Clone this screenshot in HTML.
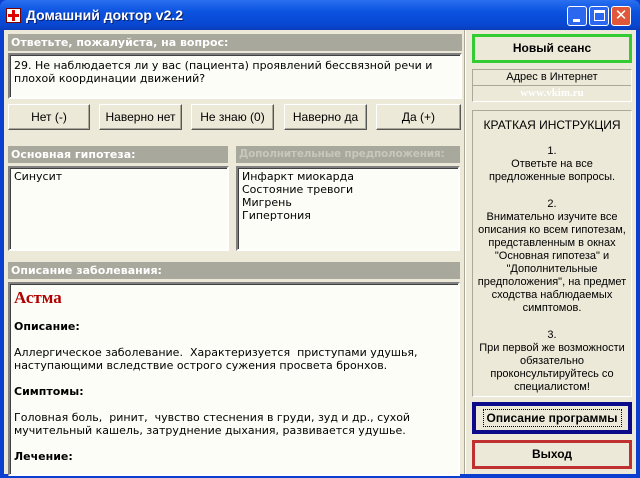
<!DOCTYPE html>
<html><head><meta charset="utf-8"><style>
*{margin:0;padding:0;box-sizing:border-box}
body{width:640px;height:478px;overflow:hidden;background:#0a3fd0;font-family:"Liberation Sans","DejaVu Sans",sans-serif;position:relative}
.abs{position:absolute}
.title{left:0;top:0;width:640px;height:30px;background:linear-gradient(#2a6ff0,#0a52e0 40%,#0846d0 85%,#0a3cb8);border-radius:7px 7px 0 0}
.title span{position:absolute;left:26px;top:7px;color:#fff;font-weight:bold;font-size:14px;text-shadow:1px 1px #0a2070}
.win{left:4px;top:30px;width:632px;height:444px;background:#ece9d8}
.hdr{background:#a9a89c;color:#fff;font-weight:bold;font-size:11px;padding:2px 3px;height:17px;font-family:"DejaVu Sans",sans-serif;white-space:nowrap;overflow:hidden}
.box{background:#fdfdf8;border:2px solid;border-color:#808080 #fff #fff #808080;box-shadow:inset 1px 1px #404040;font-size:11px;font-family:"DejaVu Sans",sans-serif;padding:2px 4px;line-height:13px}
.btn{background:#ece9d8;border:1px solid;border-color:#fff #555 #555 #fff;box-shadow:inset -1px -1px #aca899;font-size:12px;text-align:center;line-height:24px;height:26px}
.pb{text-align:center;font-size:12px;font-weight:bold}
.inst{font-size:11px;text-align:center;line-height:13px;color:#000}
</style></head><body>
<div class="abs title"><div class="abs" style="left:6px;top:8px;width:15px;height:15px;background:#fff;border:1px solid #700"><div class="abs" style="left:5px;top:1px;width:3px;height:11px;background:#d00"></div><div class="abs" style="left:1px;top:5px;width:11px;height:3px;background:#d00"></div></div><span>Домашний доктор v2.2</span>
<div class="abs" style="left:567px;top:6px;width:20px;height:20px;background:#2c68ef;border:1px solid #fff;border-radius:3px"><div class="abs" style="left:5px;top:12px;width:7px;height:3px;background:#fff"></div></div>
<div class="abs" style="left:589px;top:6px;width:20px;height:20px;background:#2c68ef;border:1px solid #fff;border-radius:3px"><div class="abs" style="left:4px;top:3px;width:11px;height:11px;border:1px solid #fff;border-top-width:3px"></div></div>
<div class="abs" style="left:611px;top:6px;width:20px;height:20px;background:#e0573a;border:1px solid #fff;border-radius:3px;color:#fff;font-weight:bold;font-size:15px;text-align:center;line-height:18px">✕</div>
</div>
<div class="abs win"></div>
<div class="abs hdr" style="left:8px;top:34px;width:454px">Ответьте, пожалуйста, на вопрос:</div>
<div class="abs box" style="left:8px;top:53px;width:454px;height:46px;padding-top:4px">29. Не наблюдается ли у вас (пациента) проявлений бессвязной речи и плохой координации движений?</div>
<div class="abs btn" style="left:8px;top:104px;width:82px">Нет (-)</div>
<div class="abs btn" style="left:99px;top:104px;width:83px">Наверно нет</div>
<div class="abs btn" style="left:191px;top:104px;width:83px">Не знаю (0)</div>
<div class="abs btn" style="left:284px;top:104px;width:83px">Наверно да</div>
<div class="abs btn" style="left:376px;top:104px;width:85px">Да (+)</div>
<div class="abs hdr" style="left:8px;top:146px;width:220px">Основная гипотеза:</div>
<div class="abs hdr" style="left:236px;top:146px;width:224px;color:#c8c7bd;font-size:10.5px;letter-spacing:-0.2px">Дополнительные предположения:</div>
<div class="abs box" style="left:8px;top:166px;width:221px;height:85px">Синусит</div>
<div class="abs box" style="left:236px;top:166px;width:224px;height:85px">Инфаркт миокарда<br>Состояние тревоги<br>Мигрень<br>Гипертония</div>
<div class="abs hdr" style="left:8px;top:262px;width:452px">Описание заболевания:</div>
<div class="abs box" style="left:8px;top:282px;width:452px;height:194px;line-height:13px">
<div style="font-family:'Liberation Serif',serif;font-weight:bold;color:#b00000;font-size:17px;line-height:20px;margin-top:2px">Астма</div>
<div style="font-weight:bold;margin-top:12px">Описание:</div>
<div style="margin-top:13px">Аллергическое заболевание.&nbsp; Характеризуется&nbsp; приступами удушья, наступающими вследствие острого сужения просвета бронхов.</div>
<div style="font-weight:bold;margin-top:13px">Симптомы:</div>
<div style="margin-top:13px">Головная боль,&nbsp; ринит,&nbsp; чувство стеснения в груди, зуд и др., сухой мучительный кашель, затруднение дыхания, развивается удушье.</div>
<div style="font-weight:bold;margin-top:13px">Лечение:</div>
</div>
<div class="abs" style="left:464px;top:30px;width:2px;height:444px;background:#fff;border-left:1px solid #aca899"></div>
<div class="abs btn pb" style="left:472px;top:34px;width:160px;height:29px;border:3px solid #33cc33;line-height:22px;box-shadow:none">Новый сеанс</div>
<div class="abs" style="left:472px;top:69px;width:160px;height:33px;border:1px solid #aca899;border-right-color:#fff;border-bottom-color:#fff"><div style="font-size:11px;text-align:center;height:16px;line-height:15px;border-bottom:1px solid #aca899">Адрес в Интернет</div><div style="font-size:11px;text-align:center;color:#fff;font-weight:bold;font-family:'Liberation Serif',serif;line-height:14px">www.vkim.ru</div></div>
<div class="abs" style="left:472px;top:110px;width:160px;height:287px;border:1px solid #aca899;border-right-color:#fff;border-bottom-color:#fff">
<div class="inst" style="font-size:12px;margin-top:8px">КРАТКАЯ ИНСТРУКЦИЯ</div>
<div class="inst" style="margin-top:13px">1.<br>Ответьте на все<br>предложенные вопросы.</div>
<div class="inst" style="margin-top:14px">2.<br>Внимательно изучите все<br>описания ко всем гипотезам,<br>представленным в окнах<br>"Основная гипотеза" и<br>"Дополнительные<br>предположения", на предмет<br>сходства наблюдаемых<br>симптомов.</div>
<div class="inst" style="margin-top:14px">3.<br>При первой же возможности<br>обязательно<br>проконсультируйтесь со<br>специалистом!</div>
</div>
<div class="abs btn pb" style="left:472px;top:402px;width:160px;height:32px;border:4px solid #0a0a8a;line-height:24px;box-shadow:none"><span style="border:1px dotted #000;padding:1px 3px">Описание программы</span></div>
<div class="abs btn pb" style="left:472px;top:440px;width:160px;height:29px;border:3px solid #c03030;line-height:22px;box-shadow:none">Выход</div>
</body></html>
